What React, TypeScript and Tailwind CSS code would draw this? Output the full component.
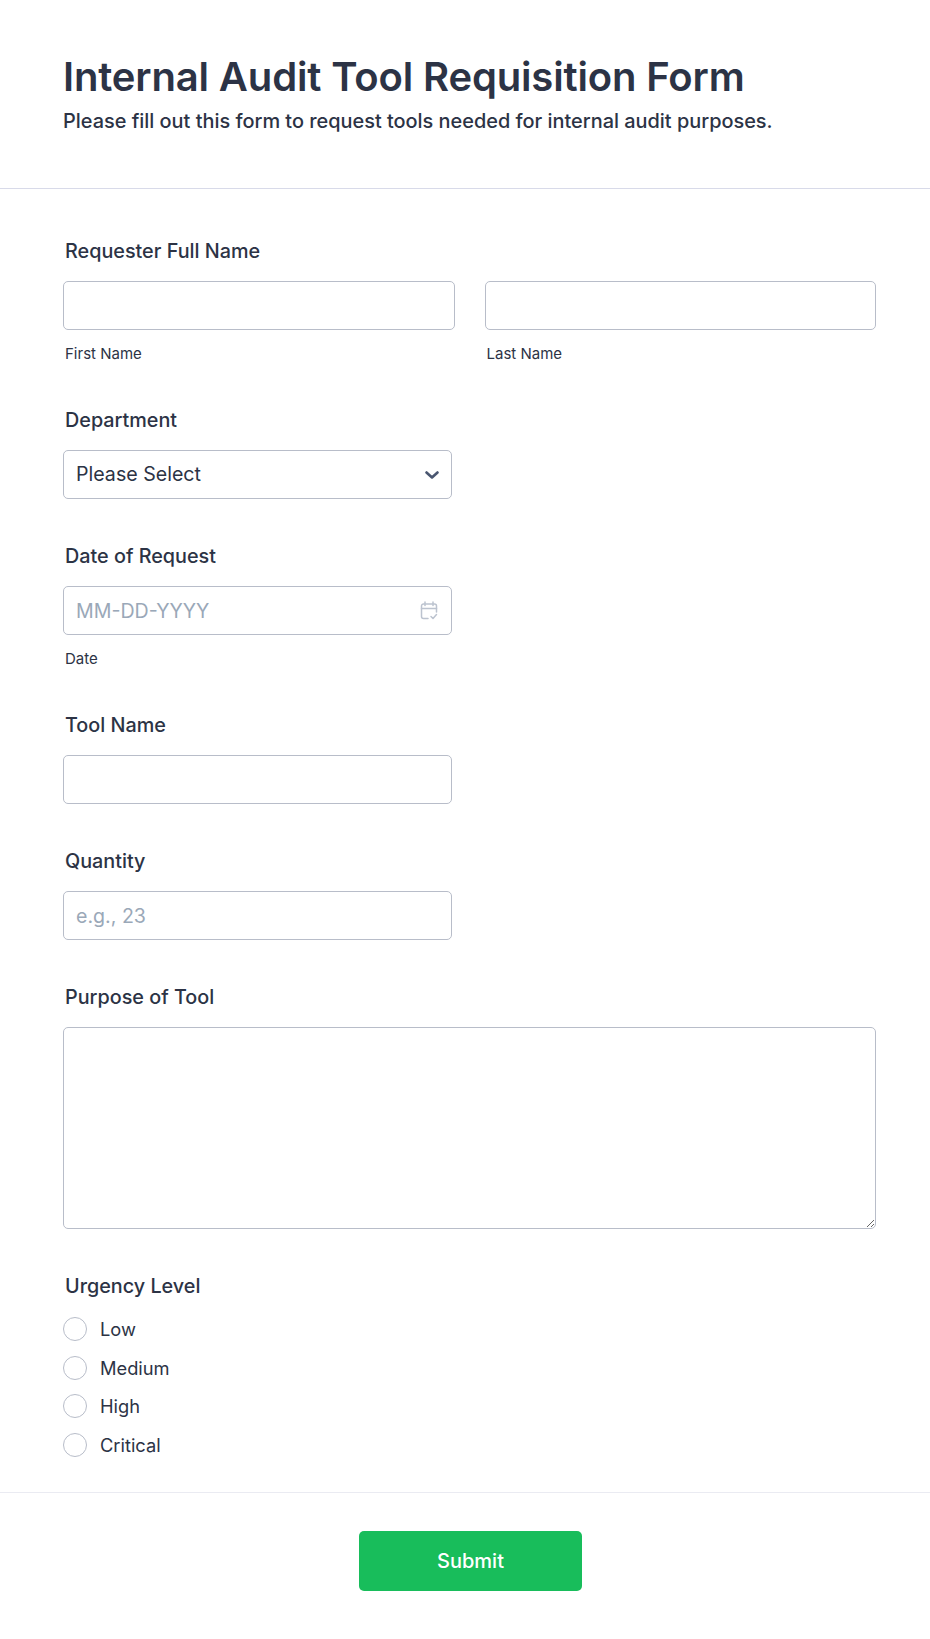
import { ReactNode } from "react";

const URGENCY = ["Low", "Medium", "High", "Critical"];

const inputClass =
  "block w-full h-[49px] rounded-[5px] border border-[#b8bdc9] bg-white px-[12px] text-[19.6px] text-[#2c3345] placeholder:text-[#9aa8b8] outline-none";

function Field({ label, children, className }: { label: string; children: ReactNode; className: string }) {
  return (
    <div className={className}>
      <label className="block pl-[2px] mb-[18px] h-6 leading-6 text-[19.8px] font-medium text-[#2c3345]">{label}</label>
      {children}
    </div>
  );
}

function SubLabel({ children }: { children: ReactNode }) {
  return <div className="mt-[16px] pl-[2px] h-4 leading-4 text-[15px] text-[#2c3345]">{children}</div>;
}

function CalendarIcon() {
  return (
    <svg width="18" height="20" viewBox="0 0 18 20" fill="none" stroke="#bcc3cf" strokeWidth="1.5" strokeLinecap="round" strokeLinejoin="round">
      <path d="M8 17.5H3.5A2 2 0 0 1 1.5 15.5V5A2 2 0 0 1 3.5 3H14.5A2 2 0 0 1 16.5 5V11" />
      <path d="M5 1V4.5M13 1V4.5M1.5 7.5H16.5" />
      <path d="M11 15.5L13 17.5L16.5 13.5" />
    </svg>
  );
}

function Chevron() {
  return (
    <svg width="14" height="8" viewBox="0 0 14 8" fill="none" stroke="#4a5670" strokeWidth="2.6" strokeLinecap="round" strokeLinejoin="round">
      <path d="M1.5 1.5L7 6.5L12.5 1.5" />
    </svg>
  );
}

export default function App() {
  return (
    <div className="min-h-[1639px] bg-white font-['Inter',sans-serif] text-[#2c3345]">
      {/* Header */}
      <header className="h-[189px] px-[63px] pt-[51px] border-b border-[#d8dae9]">
        <h1 className="text-[40px] leading-[52px] font-semibold tracking-[-0.15px]">Internal Audit Tool Requisition Form</h1>
        <p className="mt-[4.5px] text-[19.9px] leading-[26px] font-medium">
          Please fill out this form to request tools needed for internal audit purposes.
        </p>
      </header>

      <form className="px-[63px] pt-[50px]">
        <Field label="Requester Full Name" className="">
          <div className="grid grid-cols-2 gap-[30px] w-[813px]">
            <div>
              <input className={inputClass} />
              <SubLabel>First Name</SubLabel>
            </div>
            <div>
              <input className={inputClass} />
              <SubLabel>Last Name</SubLabel>
            </div>
          </div>
        </Field>

        <Field label="Department" className="mt-[46px] w-[389px]">
          <div className="relative">
            <select className={`${inputClass} appearance-none`} defaultValue="">
              <option value="">Please Select</option>
            </select>
            <div className="absolute right-[13px] top-[21px] flex">
              <Chevron />
            </div>
          </div>
        </Field>

        <Field label="Date of Request" className="mt-[45px] w-[389px]">
          <div className="relative">
            <input className={inputClass} placeholder="MM-DD-YYYY" />
            <div className="absolute right-[14px] top-[15px]">
              <CalendarIcon />
            </div>
          </div>
          <SubLabel>Date</SubLabel>
        </Field>

        <Field label="Tool Name" className="mt-[46px] w-[389px]">
          <input className={inputClass} />
        </Field>

        <Field label="Quantity" className="mt-[45px] w-[389px]">
          <input className={inputClass} placeholder="e.g., 23" />
        </Field>

        <Field label="Purpose of Tool" className="mt-[45px]">
          <textarea className="block w-[813px] h-[202px] rounded-[5px] border border-[#b8bdc9] bg-white outline-none resize-y" />
        </Field>

        <div className="mt-[45px]">
          <div className="pl-[2px] h-6 leading-6 text-[19.8px] font-medium">Urgency Level</div>
          <div className="mt-[19px] flex flex-col gap-[14.5px]">
            {URGENCY.map((u) => (
              <label key={u} className="flex items-center h-6 gap-[13px]">
                <span className="w-6 h-6 rounded-full border border-[#b8bdc9] bg-white" />
                <span className="text-[18.3px] leading-6 text-[#2c3345]">{u}</span>
              </label>
            ))}
          </div>
        </div>
      </form>

      {/* Footer */}
      <div className="mt-[35px] border-t border-[#eaebf2] pt-[38px] flex justify-center pl-[11px]">
        <button type="button" className="w-[223px] h-[60px] rounded-[5px] bg-[#18bd5b] text-white text-[20px] font-medium">
          Submit
        </button>
      </div>
    </div>
  );
}
